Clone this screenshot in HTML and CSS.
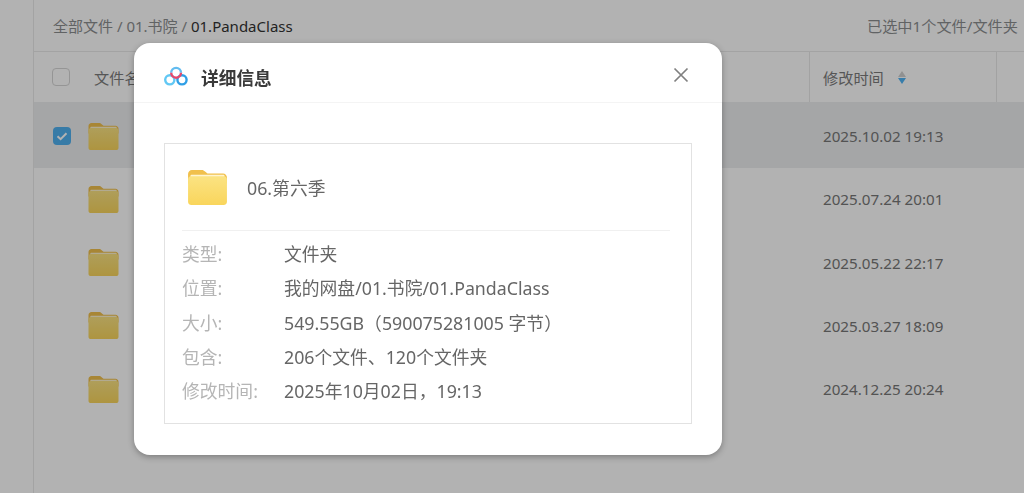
FILE: index.html
```html
<!DOCTYPE html>
<html lang="zh-CN">
<head>
  <meta charset="UTF-8">
  <meta name="viewport" content="width=device-width, initial-scale=1.0">
  <title>详细信息</title>
  <link rel="stylesheet" href="styles.css">
</head>
<body>
  <svg class="defs" width="0" height="0">
    <defs>
      <linearGradient id="folderFront" x1="0" y1="0" x2="0" y2="1">
        <stop offset="0" stop-color="#fbe382"/>
        <stop offset="1" stop-color="#f9d55c"/>
      </linearGradient>
    </defs>
    <symbol id="folder" viewBox="0 0 40 36">
      <path d="M4 0h10c1.500 0 2.500.6 3.500 1.600L20 3.500h16c2.200 0 4 1.800 4 4V14H0V4c0-2.200 1.800-4 4-4z" fill="#f1c04c"/>
      <rect x="2.500" y="5" width="35" height="8" rx="1" fill="#fff4cf"/>
      <rect y="6.500" width="40" height="29.500" rx="3.500" fill="url(#folderFront)"/>
    </symbol>
  </svg>

  <div class="app">
    <aside class="sidebar"></aside>
    <main class="main">
      <header class="topbar">
        <div class="crumbs">全部文件 / 01.书院 / <span class="current">01.PandaClass</span></div>
        <div class="selected-count">已选中1个文件/文件夹</div>
      </header>

      <div class="table-head">
        <div class="head-name">
          <span class="checkbox"></span>
          <span>文件名</span>
        </div>
        <div class="head-time">
          <span>修改时间</span>
          <span class="sort"><i class="up"></i><i class="down"></i></span>
        </div>
        <div></div>
      </div>

      <div class="row row-selected">
        <div class="row-name">
          <span class="checkbox checked">
            <svg viewBox="0 0 18 18" width="18" height="18"><path d="M4.500 9.200l3.100 3 5.900-6" fill="none" stroke="#fff" stroke-width="2"/></svg>
          </span>
          <svg class="row-folder"><use href="#folder"/></svg>
        </div>
        <div class="row-time">2025.10.02 19:13</div>
      </div>
      <div class="row">
        <div class="row-name"><span class="checkbox-space"></span><svg class="row-folder"><use href="#folder"/></svg></div>
        <div class="row-time">2025.07.24 20:01</div>
      </div>
      <div class="row">
        <div class="row-name"><span class="checkbox-space"></span><svg class="row-folder"><use href="#folder"/></svg></div>
        <div class="row-time">2025.05.22 22:17</div>
      </div>
      <div class="row">
        <div class="row-name"><span class="checkbox-space"></span><svg class="row-folder"><use href="#folder"/></svg></div>
        <div class="row-time">2025.03.27 18:09</div>
      </div>
      <div class="row">
        <div class="row-name"><span class="checkbox-space"></span><svg class="row-folder"><use href="#folder"/></svg></div>
        <div class="row-time">2024.12.25 20:24</div>
      </div>
    </main>
  </div>

  <div class="scrim"></div>

  <section class="dialog">
    <div class="dialog-head">
      <svg class="logo" viewBox="0 0 24 20" width="24" height="20">
        <circle cx="5.800" cy="13.800" r="4.600" fill="none" stroke="#62c8f4" stroke-width="2.400"/>
        <circle cx="18" cy="13.800" r="4.600" fill="none" stroke="#2f9fe6" stroke-width="2.400"/>
        <path d="M7.200 6.800a4.900 4.900 0 0 1 9.800 0" fill="none" stroke="#62bcf0" stroke-width="2.400"/>
        <path d="M7.200 6.800a4.900 4.900 0 0 0 9.800 0" fill="none" stroke="#e8486a" stroke-width="2.400"/>
      </svg>
      <h2 class="dialog-title">详细信息</h2>
      <svg class="close" viewBox="0 0 16 16" width="16" height="16"><path d="M1.500 1.500l13 13M14.500 1.500l-13 13" stroke="#808080" stroke-width="1.700" fill="none"/></svg>
    </div>
    <div class="dialog-body">
      <div class="info-box">
        <div class="info-title">
          <svg class="big-folder"><use href="#folder"/></svg>
          <span>06.第六季</span>
        </div>
        <dl class="info-list">
          <div class="info-row"><dt>类型:</dt><dd>文件夹</dd></div>
          <div class="info-row"><dt>位置:</dt><dd>我的网盘/01.书院/01.PandaClass</dd></div>
          <div class="info-row"><dt>大小:</dt><dd>549.55GB（590075281005 字节）</dd></div>
          <div class="info-row"><dt>包含:</dt><dd>206个文件、120个文件夹</dd></div>
          <div class="info-row"><dt>修改时间:</dt><dd>2025年10月02日，19:13</dd></div>
        </dl>
      </div>
    </div>
  </section>
</body>
</html>
```

FILE: styles.css
```css
* {
  box-sizing: border-box;
}
html, body {
  height: 100%;
}
body {
  margin: 0;
  overflow: hidden;
  background-color: #ffffff;
  color: #333;
  font-family: "Noto Sans", "Noto Sans CJK SC", sans-serif;
  font-size: 15.200px;
}
.defs {
  position: absolute;
}
.app {
  display: flex;
  height: 100%;
}
.sidebar {
  width: 34px;
  flex: none;
  border-right: 1px solid #eaeaea;
}
.main {
  flex: 1;
  min-width: 0;
}
.topbar {
  display: flex;
  justify-content: space-between;
  align-items: center;
  height: 52px;
  padding: 0 6px 1px 19px;
  border-bottom: 1px solid #eaeaea;
}
.crumbs {
  color: #8c8e90;
  font-size: 15px;
}
.current {
  color: #333;
}
.selected-count {
  color: #8c8e90;
}
.table-head {
  display: grid;
  grid-template-columns: 775px 188px 1fr;
  height: 50px;
  color: #7c7c7c;
}
.table-head > div {
  display: flex;
  align-items: center;
}
.head-name {
  padding-left: 18px;
  gap: 24px;
}
.head-time {
  padding-left: 13px;
  gap: 14px;
  border-left: 1px solid #e8e8e8;
  border-right: 1px solid #e8e8e8;
}
.sort {
  display: flex;
  flex-direction: column;
  gap: 1px;
}
.sort i {
  display: block;
  width: 0;
  border-left: 4.500px solid transparent;
  border-right: 4.500px solid transparent;
}
.sort .up {
  border-bottom: 6.500px solid #d0d0d0;
}
.sort .down {
  border-top: 6.500px solid #4fb4f5;
}
.checkbox {
  display: block;
  width: 18px;
  height: 18px;
  flex: none;
  border: 1px solid #d6d6d6;
  border-radius: 4px;
  background: #fff;
}
.checkbox.checked {
  border: none;
  background: #4fb0f0;
}
.checkbox svg {
  display: block;
}
.checkbox-space {
  width: 18px;
  flex: none;
}
.row {
  display: grid;
  grid-template-columns: 775px 1fr;
  height: 63.350px;
  color: #777;
}
.row-selected {
  height: 65.500px;
  padding-top: 3px;
  background-color: #eceef0;
}
.row-name {
  display: flex;
  align-items: center;
  padding-left: 19px;
  gap: 17px;
}
.row-folder {
  width: 31px;
  height: 27px;
}
.row-time {
  display: flex;
  align-items: center;
  padding-left: 14px;
}
.scrim {
  position: fixed;
  inset: 0;
  background: rgba(0, 0, 0, 0.3);
}
.dialog {
  position: absolute;
  left: 134px;
  top: 43px;
  width: 588px;
  height: 412px;
  background: #fff;
  border-radius: 16px;
  box-shadow: 0 2px 6px rgba(0, 0, 0, 0.3);
}
.dialog-head {
  display: flex;
  align-items: center;
  height: 60px;
  padding: 5px 33px 0 30px;
  border-bottom: 1px solid #f4f4f4;
}
.logo {
  flex: none;
  margin-top: 1px;
}
.dialog-title {
  flex: 1;
  margin: 3px 0 0 13px;
  font-size: 17.700px;
  font-weight: 600;
  color: #3a3a3a;
}
.close {
  display: block;
  margin-bottom: 1px;
}
.dialog-body {
  padding: 40px 30px 0;
}
.info-box {
  height: 281px;
  padding: 0 21px 0 17px;
  border: 1px solid #e2e2e2;
}
.info-title {
  display: flex;
  align-items: center;
  gap: 20px;
  height: 87px;
  padding-left: 6px;
  border-bottom: 1px solid #f0f0f0;
  font-size: 17.800px;
  color: #666;
}
.big-folder {
  width: 39px;
  height: 35px;
}
.info-list {
  margin: 5px 0 0;
}
.info-row {
  display: flex;
  align-items: center;
  height: 34.300px;
  font-size: 17.800px;
  color: #666;
}
.info-row dt {
  width: 102px;
  color: #b5b5b5;
}
.info-row dd {
  margin: 0;
}
```
